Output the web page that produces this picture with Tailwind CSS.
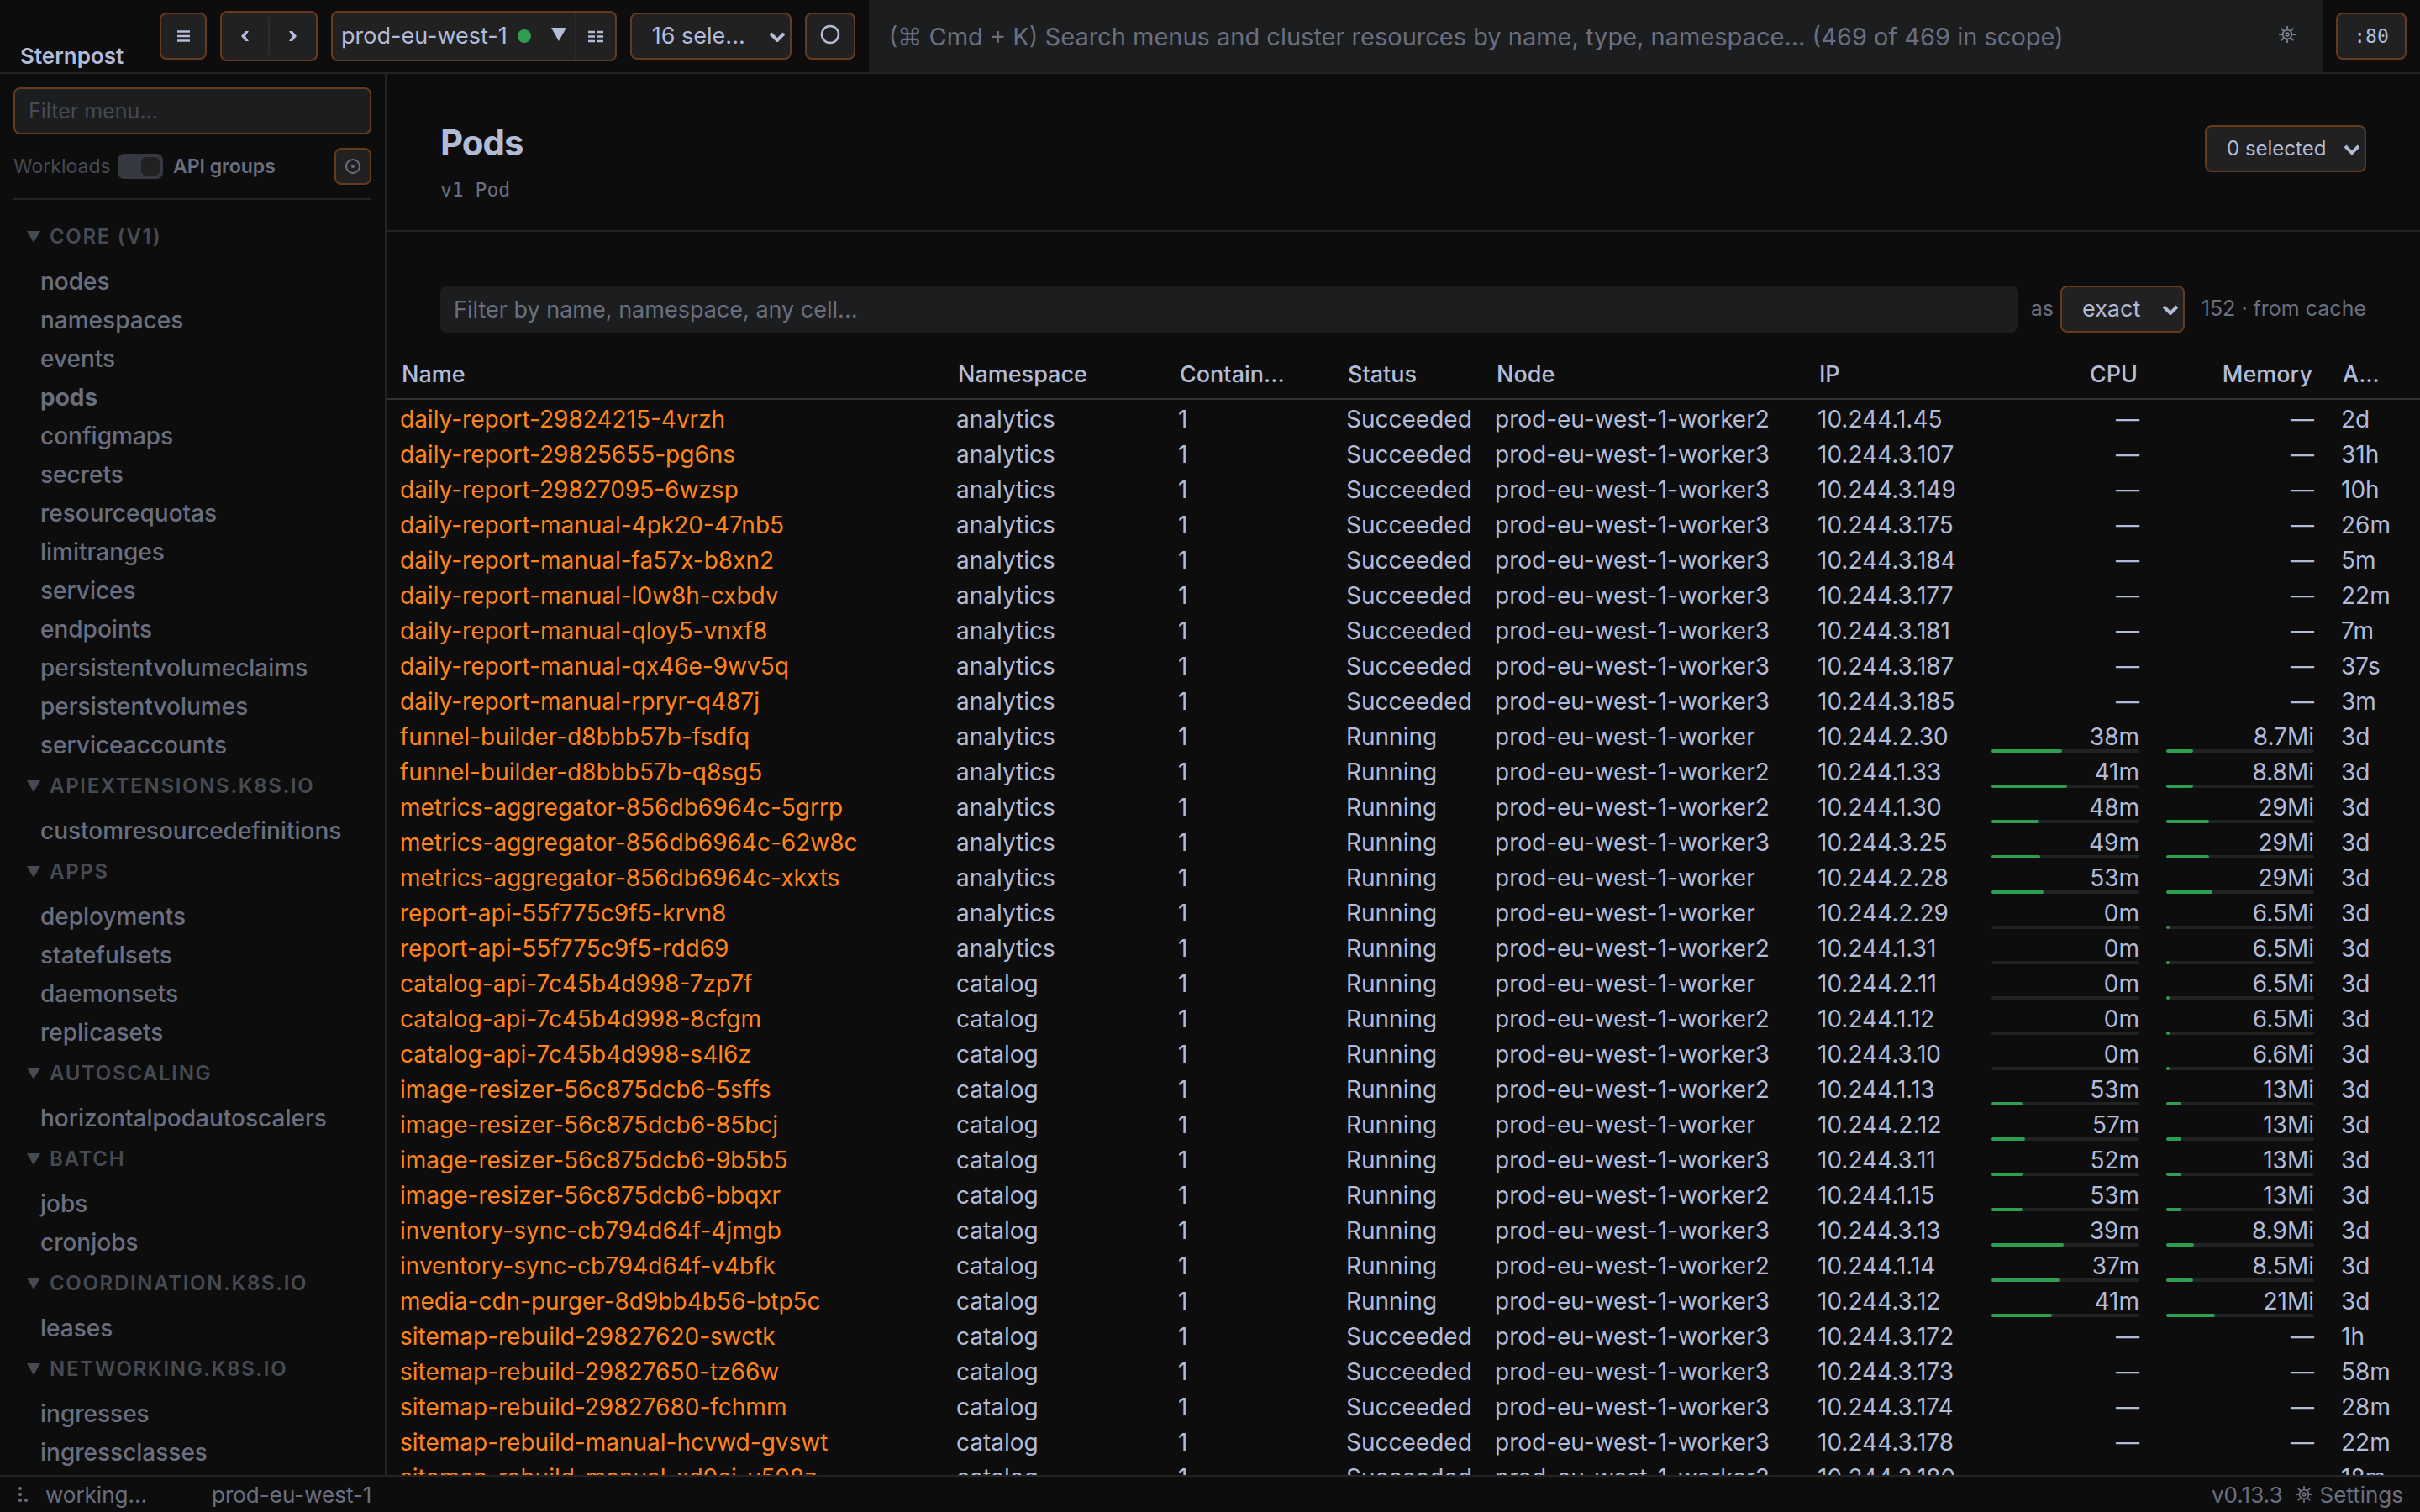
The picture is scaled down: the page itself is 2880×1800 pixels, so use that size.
<!DOCTYPE html>
<html lang="en">
<head>
  <meta charset="UTF-8" />
  <meta name="viewport" content="width=device-width, initial-scale=1.0" />
  <title>Sternpost - Pods</title>
  <script src="https://cdn.jsdelivr.net/npm/@tailwindcss/browser@4"></script>
</head>
<body class="flex h-screen flex-col overflow-hidden bg-[#0d0d0d] font-[Inter,'Liberation_Sans',sans-serif] text-[28px] text-[#b2bbd7]">

  <!-- Top bar -->
  <header class="flex h-[88px] shrink-0 items-stretch border-b-2 border-[#232323]">
    <div class="flex flex-1 items-center gap-4 pl-6">
      <a href="#" class="mr-6 w-[126px] self-end text-[26px] font-semibold">Sternpost</a>
      <button aria-label="Toggle menu" class="flex h-14 w-14 items-center justify-center rounded-lg border-2 border-[#663a1a] bg-[#212121]">
        <svg width="15" height="14" viewBox="0 0 15 14" stroke="currentColor" stroke-width="2.5"><path d="M0 1.5h15M0 7h15M0 12.5h15" /></svg>
      </button>
      <div class="flex h-[60px] w-[116px] rounded-lg border-2 border-[#663a1a] bg-[#212121]">
        <button aria-label="Back" class="flex flex-1 items-center justify-center">
          <svg width="9" height="12" viewBox="0 0 9 12" fill="currentColor"><path d="M5 0h4L5 6l4 6H5L0 6z" /></svg>
        </button>
        <button aria-label="Forward" class="flex flex-1 items-center justify-center rounded-l-lg border-l-2 border-[#2c2c2c]">
          <svg width="9" height="12" viewBox="0 0 9 12" fill="currentColor"><path d="M4 0H0l4 6-4 6h4l5-6z" /></svg>
        </button>
      </div>
      <div class="flex h-[60px] rounded-lg border-2 border-[#663a1a] bg-[#212121]">
        <button class="flex items-center border-r-2 border-[#2c2c2c] px-[10px] text-[27px]">
          <span>prod-eu-west-1</span>
          <span class="ml-3 h-4 w-4 rounded-full bg-[#2f9e51]"></span>
          <svg class="mb-1 ml-6" width="18" height="16" viewBox="0 0 18 16" fill="currentColor"><path d="M0 0h18L9 16z" /></svg>
        </button>
        <button aria-label="Cluster grid" class="flex w-[46px] items-center justify-center">
          <svg width="18" height="15" viewBox="0 0 18 15" stroke="currentColor" stroke-width="2.6"><path d="M0 2h8M10 2h8M0 7.5h8M10 7.5h8M0 13h8M10 13h8" /></svg>
        </button>
      </div>
      <div class="relative">
        <select aria-label="Namespaces" class="h-14 w-48 appearance-none rounded-lg border-2 border-[#663a1a] bg-[#212121] pl-6 text-[27px]">
          <option>16 sele...</option>
        </select>
        <svg class="pointer-events-none absolute top-[23px] right-2" width="18" height="12" viewBox="0 0 18 12" fill="none" stroke="currentColor" stroke-width="4"><path d="M1 2l8 8 8-8" /></svg>
      </div>
      <button aria-label="Status" class="flex h-14 w-[60px] items-center justify-center rounded-lg border-2 border-[#663a1a] bg-[#212121]">
        <svg class="mb-1" width="24" height="24" viewBox="0 0 24 24" fill="none" stroke="currentColor" stroke-width="2.6"><circle cx="12" cy="12" r="10" /></svg>
      </button>
      <div class="flex flex-1 items-center self-stretch bg-[#1c1d1f] pr-8 pl-6">
        <input aria-label="Search" type="text" placeholder="(⌘ Cmd + K) Search menus and cluster resources by name, type, namespace... (469 of 469 in scope)" class="h-full min-w-0 flex-1 text-[29px] outline-none placeholder:text-[#6a6f7f]" />
        <button aria-label="Search settings" class="mb-1 text-[#7b8193]">
          <svg width="20" height="20" viewBox="0 0 22 22" fill="none" stroke="currentColor" stroke-width="2"><circle cx="11" cy="11" r="6" /><circle cx="11" cy="11" r="2" /><path d="M11 0v5M11 17v5M0 11h5M17 11h5M3 3l4 4M15 15l4 4M3 19l4-4M15 7l4-4" /></svg>
        </button>
      </div>
    </div>
    <div class="flex items-center px-4">
      <button class="h-14 w-[84px] rounded-lg border-2 border-[#663a1a] bg-[#212121] font-['DejaVu_Sans_Mono',monospace] text-[23px]">:80</button>
    </div>
  </header>

  <div class="flex min-h-0 flex-1">
    <!-- Sidebar -->
    <aside class="flex w-[460px] shrink-0 flex-col overflow-hidden border-r-2 border-[#232323] px-4 pt-4">
      <input aria-label="Filter menu" type="text" placeholder="Filter menu..." class="h-14 w-full shrink-0 rounded-lg border-2 border-[#663a1a] bg-[#1c1d1f] px-4 text-[25px] outline-none placeholder:text-[#464a53]" />
      <div class="mt-4 flex h-11 shrink-0 items-center text-[23px]">
        <span class="w-[124px] text-[#464a53]">Workloads</span>
        <label class="flex items-center gap-3 font-semibold text-[#6a6f7f]">
          <input type="checkbox" role="switch" checked class="h-[30px] w-[54px] appearance-none rounded-lg bg-[#363942] p-1 before:ml-6 before:block before:h-[22px] before:w-[22px] before:rounded-md before:bg-[#212121] before:content-['']" />
          API groups
        </label>
        <button aria-label="Locate current" class="ml-auto flex h-11 w-11 items-center justify-center rounded-lg border-2 border-[#663a1a] bg-[#212121] text-[#6a6f7f]">
          <svg width="18" height="18" viewBox="0 0 18 18" fill="none" stroke="currentColor" stroke-width="2"><circle cx="9" cy="9" r="8" /><circle cx="9" cy="9" r="1" /></svg>
        </button>
      </div>
      <nav id="menu" class="mt-4 border-t-2 border-[#232323] px-4 pt-4"></nav>
    </aside>

    <!-- Content -->
    <main class="flex min-w-0 flex-1 flex-col overflow-hidden">
      <div class="flex h-[188px] shrink-0 items-center justify-between border-b-2 border-[#232323] px-16">
        <div class="pt-[22px]">
          <h1 class="text-[42px] leading-[56px] font-bold tracking-tight">Pods</h1>
          <p class="mt-3 font-['DejaVu_Sans_Mono',monospace] text-[23px] leading-8 text-[#6a6f7f]">v1 Pod</p>
        </div>
        <div class="relative -mt-2">
          <select aria-label="Selection" class="h-14 w-48 appearance-none rounded-lg border-2 border-[#663a1a] bg-[#212121] pl-6 text-[24px]">
            <option>0 selected</option>
          </select>
          <svg class="pointer-events-none absolute top-[23px] right-2" width="18" height="12" viewBox="0 0 18 12" fill="none" stroke="currentColor" stroke-width="4"><path d="M1 2l8 8 8-8" /></svg>
        </div>
      </div>

      <div class="mt-16 flex shrink-0 items-center px-16">
        <input aria-label="Filter pods" type="text" placeholder="Filter by name, namespace, any cell..." class="h-14 min-w-0 flex-1 rounded-lg bg-[#1c1d1f] px-4 text-[27px] outline-none placeholder:text-[#6a6f7f]" />
        <label for="mode" class="mx-2 pl-2 text-[25px] text-[#6a6f7f]">as</label>
        <div class="relative">
          <select id="mode" class="h-14 w-[148px] appearance-none rounded-lg border-2 border-[#663a1a] bg-[#212121] pl-6 text-[27px]">
            <option>exact</option>
          </select>
          <svg class="pointer-events-none absolute top-[23px] right-2" width="18" height="12" viewBox="0 0 18 12" fill="none" stroke="currentColor" stroke-width="4"><path d="M1 2l8 8 8-8" /></svg>
        </div>
        <span class="w-[216px] text-right text-[25px] text-[#6a6f7f]">152 · from cache</span>
      </div>

      <table class="mt-5 w-full table-fixed border-separate border-spacing-0 whitespace-nowrap">
        <thead>
          <tr class="h-[60px] text-left text-[27px]">
            <th class="border-b-2 border-[#333333] px-[18px] pt-[2px] font-medium">Name</th>
            <th class="w-[264px] border-b-2 border-[#333333] px-[18px] pt-[2px] font-medium">Namespace</th>
            <th class="w-[200px] border-b-2 border-[#333333] px-[18px] pt-[2px] font-medium">Contain...</th>
            <th class="w-[177px] border-b-2 border-[#333333] px-[18px] pt-[2px] font-medium">Status</th>
            <th class="w-[384px] border-b-2 border-[#333333] px-[18px] pt-[2px] font-medium">Node</th>
            <th class="w-[207px] border-b-2 border-[#333333] px-[18px] pt-[2px] font-medium">IP</th>
            <th class="w-[208px] border-b-2 border-[#333333] px-[18px] pt-[2px] text-right font-medium">CPU</th>
            <th class="w-[208px] border-b-2 border-[#333333] px-[18px] pt-[2px] text-right font-medium">Memory</th>
            <th class="w-[110px] border-b-2 border-[#333333] px-[18px] pt-[2px] font-medium">A...</th>
          </tr>
        </thead>
        <tbody id="pods"></tbody>
      </table>
    </main>
  </div>

  <!-- Status bar -->
  <footer class="flex h-11 shrink-0 items-center border-t-2 border-[#232323] px-5 text-[26px] text-[#6a6f7f]">
    <svg width="14" height="20" viewBox="0 0 14 20" fill="currentColor"><circle cx="4" cy="3" r="2" /><circle cx="4" cy="10" r="2" /><circle cx="4" cy="17" r="2" /><circle cx="11" cy="17" r="2" /></svg>
    <span class="ml-5 w-[198px]">working...</span>
    <span>prod-eu-west-1</span>
    <span class="ml-auto">v0.13.3</span>
    <a href="#" class="ml-4 flex items-center gap-2">
      <svg width="20" height="20" viewBox="0 0 22 22" fill="none" stroke="currentColor" stroke-width="2"><circle cx="11" cy="11" r="6" /><circle cx="11" cy="11" r="2" /><path d="M11 0v5M11 17v5M0 11h5M17 11h5M3 3l4 4M15 15l4 4M3 19l4-4M15 7l4-4" /></svg>
      Settings
    </a>
  </footer>

  <script>
    const groups = [
      ['Core (v1)', ['nodes', 'namespaces', 'events', 'pods', 'configmaps', 'secrets', 'resourcequotas', 'limitranges', 'services', 'endpoints', 'persistentvolumeclaims', 'persistentvolumes', 'serviceaccounts']],
      ['apiextensions.k8s.io', ['customresourcedefinitions']],
      ['apps', ['deployments', 'statefulsets', 'daemonsets', 'replicasets']],
      ['autoscaling', ['horizontalpodautoscalers']],
      ['batch', ['jobs', 'cronjobs']],
      ['coordination.k8s.io', ['leases']],
      ['networking.k8s.io', ['ingresses', 'ingressclasses']]
    ];

    document.getElementById('menu').innerHTML = groups.map(([name, items]) => `
      <section>
        <h2>
          <button class="flex h-14 items-center gap-[11px] text-[24px] font-semibold tracking-[0.07em] text-[#464a53] uppercase">
            <svg width="16" height="14" viewBox="0 0 16 14" fill="currentColor"><path d="M0 0h16L8 14z" /></svg>
            ${name}
          </button>
        </h2>
        <ul class="-mb-[2px] pt-[2px] pl-4 leading-[46px] text-[#6a6f7f]">
          ${items.map(i => `<li><a href="#" class="${i === 'pods' ? 'font-bold' : 'font-medium'}">${i}</a></li>`).join('')}
        </ul>
      </section>`).join('');

    // name, namespace, status, worker, ip, age, cpu, cpu %, memory, memory %
    const pods = [
      ['daily-report-29824215-4vrzh', 'analytics', 'Succeeded', 'worker2', '10.244.1.45', '2d'],
      ['daily-report-29825655-pg6ns', 'analytics', 'Succeeded', 'worker3', '10.244.3.107', '31h'],
      ['daily-report-29827095-6wzsp', 'analytics', 'Succeeded', 'worker3', '10.244.3.149', '10h'],
      ['daily-report-manual-4pk20-47nb5', 'analytics', 'Succeeded', 'worker3', '10.244.3.175', '26m'],
      ['daily-report-manual-fa57x-b8xn2', 'analytics', 'Succeeded', 'worker3', '10.244.3.184', '5m'],
      ['daily-report-manual-l0w8h-cxbdv', 'analytics', 'Succeeded', 'worker3', '10.244.3.177', '22m'],
      ['daily-report-manual-qloy5-vnxf8', 'analytics', 'Succeeded', 'worker3', '10.244.3.181', '7m'],
      ['daily-report-manual-qx46e-9wv5q', 'analytics', 'Succeeded', 'worker3', '10.244.3.187', '37s'],
      ['daily-report-manual-rpryr-q487j', 'analytics', 'Succeeded', 'worker3', '10.244.3.185', '3m'],
      ['funnel-builder-d8bbb57b-fsdfq', 'analytics', 'Running', 'worker', '10.244.2.30', '3d', '38m', 48, '8.7Mi', 18],
      ['funnel-builder-d8bbb57b-q8sg5', 'analytics', 'Running', 'worker2', '10.244.1.33', '3d', '41m', 51, '8.8Mi', 18],
      ['metrics-aggregator-856db6964c-5grrp', 'analytics', 'Running', 'worker2', '10.244.1.30', '3d', '48m', 32, '29Mi', 29],
      ['metrics-aggregator-856db6964c-62w8c', 'analytics', 'Running', 'worker3', '10.244.3.25', '3d', '49m', 33, '29Mi', 29],
      ['metrics-aggregator-856db6964c-xkxts', 'analytics', 'Running', 'worker', '10.244.2.28', '3d', '53m', 35, '29Mi', 31],
      ['report-api-55f775c9f5-krvn8', 'analytics', 'Running', 'worker', '10.244.2.29', '3d', '0m', 0, '6.5Mi', 2],
      ['report-api-55f775c9f5-rdd69', 'analytics', 'Running', 'worker2', '10.244.1.31', '3d', '0m', 0, '6.5Mi', 2],
      ['catalog-api-7c45b4d998-7zp7f', 'catalog', 'Running', 'worker', '10.244.2.11', '3d', '0m', 0, '6.5Mi', 2],
      ['catalog-api-7c45b4d998-8cfgm', 'catalog', 'Running', 'worker2', '10.244.1.12', '3d', '0m', 0, '6.5Mi', 2],
      ['catalog-api-7c45b4d998-s4l6z', 'catalog', 'Running', 'worker3', '10.244.3.10', '3d', '0m', 0, '6.6Mi', 2],
      ['image-resizer-56c875dcb6-5sffs', 'catalog', 'Running', 'worker2', '10.244.1.13', '3d', '53m', 21, '13Mi', 10],
      ['image-resizer-56c875dcb6-85bcj', 'catalog', 'Running', 'worker', '10.244.2.12', '3d', '57m', 23, '13Mi', 10],
      ['image-resizer-56c875dcb6-9b5b5', 'catalog', 'Running', 'worker3', '10.244.3.11', '3d', '52m', 21, '13Mi', 10],
      ['image-resizer-56c875dcb6-bbqxr', 'catalog', 'Running', 'worker2', '10.244.1.15', '3d', '53m', 21, '13Mi', 10],
      ['inventory-sync-cb794d64f-4jmgb', 'catalog', 'Running', 'worker3', '10.244.3.13', '3d', '39m', 49, '8.9Mi', 19],
      ['inventory-sync-cb794d64f-v4bfk', 'catalog', 'Running', 'worker2', '10.244.1.14', '3d', '37m', 46, '8.5Mi', 18],
      ['media-cdn-purger-8d9bb4b56-btp5c', 'catalog', 'Running', 'worker3', '10.244.3.12', '3d', '41m', 41, '21Mi', 33],
      ['sitemap-rebuild-29827620-swctk', 'catalog', 'Succeeded', 'worker3', '10.244.3.172', '1h'],
      ['sitemap-rebuild-29827650-tz66w', 'catalog', 'Succeeded', 'worker3', '10.244.3.173', '58m'],
      ['sitemap-rebuild-29827680-fchmm', 'catalog', 'Succeeded', 'worker3', '10.244.3.174', '28m'],
      ['sitemap-rebuild-manual-hcvwd-gvswt', 'catalog', 'Succeeded', 'worker3', '10.244.3.178', '22m'],
      ['sitemap-rebuild-manual-xd9ci-v598z', 'catalog', 'Succeeded', 'worker3', '10.244.3.180', '18m']
    ];

    const usage = (text, pct) => text === undefined
      ? '<td class="px-4 pt-1 text-right">—</td>'
      : `<td class="relative px-4 pt-1 text-right">${text}
          <div class="absolute inset-x-4 bottom-0 h-1 rounded-full bg-[#212223]">
            <div class="h-1 rounded-full bg-[#2f9e51]" style="width: ${pct}%"></div>
          </div>
        </td>`;

    document.getElementById('pods').innerHTML = pods.map(([name, ns, status, worker, ip, age, cpu, cpuPct, mem, memPct]) => `
      <tr class="h-[42px] leading-[38px]">
        <td class="px-4 pt-1"><a href="#" class="text-[#ff851b]">${name}</a></td>
        <td class="px-4 pt-1">${ns}</td>
        <td class="px-4 pt-1">1</td>
        <td class="px-4 pt-1">${status}</td>
        <td class="px-4 pt-1">prod-eu-west-1-${worker}</td>
        <td class="px-4 pt-1">${ip}</td>
        ${usage(cpu, cpuPct)}
        ${usage(mem, memPct)}
        <td class="px-4 pt-1">${age}</td>
      </tr>`).join('');
  </script>
</body>
</html>
